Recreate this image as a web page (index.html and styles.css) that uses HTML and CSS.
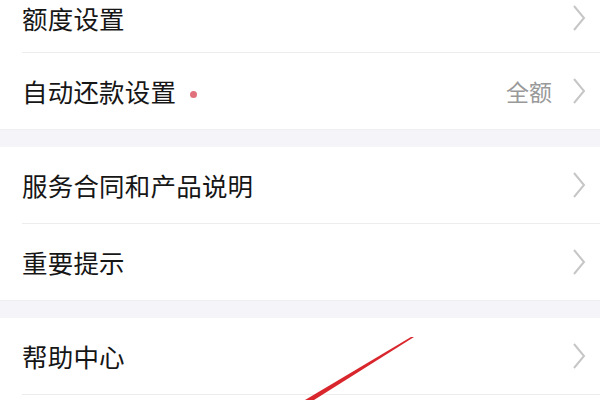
FILE: index.html
```html
<!DOCTYPE html>
<html lang="zh-CN">
<head>
<meta charset="utf-8">
<link rel="stylesheet" href="styles.css">
</head>
<body>
<div class="page">
  <div class="group first-group">
    <div class="row row-first">
      <span class="label">额度设置</span>
      <span class="right"><svg class="chev" viewBox="0 0 14 28"><path d="M2 2 L12 14 L2 26"/></svg></span>
    </div>
    <div class="divider"></div>
    <div class="row">
      <span class="label">自动还款设置<i class="dot"></i></span>
      <span class="right"><span class="value">全额</span><svg class="chev" viewBox="0 0 14 28"><path d="M2 2 L12 14 L2 26"/></svg></span>
    </div>
  </div>
  <div class="gap"></div>
  <div class="group">
    <div class="row">
      <span class="label">服务合同和产品说明</span>
      <span class="right"><svg class="chev" viewBox="0 0 14 28"><path d="M2 2 L12 14 L2 26"/></svg></span>
    </div>
    <div class="divider"></div>
    <div class="row">
      <span class="label">重要提示</span>
      <span class="right"><svg class="chev" viewBox="0 0 14 28"><path d="M2 2 L12 14 L2 26"/></svg></span>
    </div>
  </div>
  <div class="gap"></div>
  <div class="group">
    <div class="row">
      <span class="label">帮助中心</span>
      <span class="right"><svg class="chev" viewBox="0 0 14 28"><path d="M2 2 L12 14 L2 26"/></svg></span>
    </div>
    <div class="divider"></div>
  </div>
  <svg class="annot" viewBox="0 0 600 400" width="600" height="400">
    <polygon points="305,400 314,400 414,337 411,337" fill="#d8262c"/>
  </svg>
</div>
</body>
</html>
```
FILE: styles.css
```css
html, body {
  margin: 0;
  padding: 0;
  background: #ffffff;
}
.page {
  position: relative;
  width: 600px;
  height: 400px;
  overflow: hidden;
  font-family: "Noto Sans CJK SC", "Noto Sans", sans-serif;
}
.group {
  background: #ffffff;
}
.first-group {
  margin-top: -20px;
}
.row {
  height: 76px;
  display: flex;
  align-items: center;
  justify-content: space-between;
  padding: 0 14px 0 22px;
}
.row-first {
  height: 72px;
  padding-top: 4px;
  box-sizing: border-box;
}
.label {
  display: flex;
  align-items: center;
  font-size: 25.5px;
  line-height: 30px;
  color: #161616;
  letter-spacing: 0.2px;
}
.dot {
  display: inline-block;
  width: 7px;
  height: 7px;
  border-radius: 50%;
  background: #e0707c;
  margin-left: 14px;
  margin-top: 6px;
}
.right {
  display: flex;
  align-items: center;
}
.value {
  font-size: 23px;
  color: #999999;
  margin-right: 20px;
}
.chev {
  width: 14px;
  height: 28px;
  fill: none;
  stroke: #c6c6c6;
  stroke-width: 2;
}
.divider {
  height: 1px;
  margin-left: 22px;
  background: #ececec;
}
.gap {
  height: 18px;
  background: #f4f4f9;
  border-top: 1px solid #efeff3;
  box-sizing: border-box;
}
.annot {
  position: absolute;
  left: 0;
  top: 0;
  pointer-events: none;
}
```
